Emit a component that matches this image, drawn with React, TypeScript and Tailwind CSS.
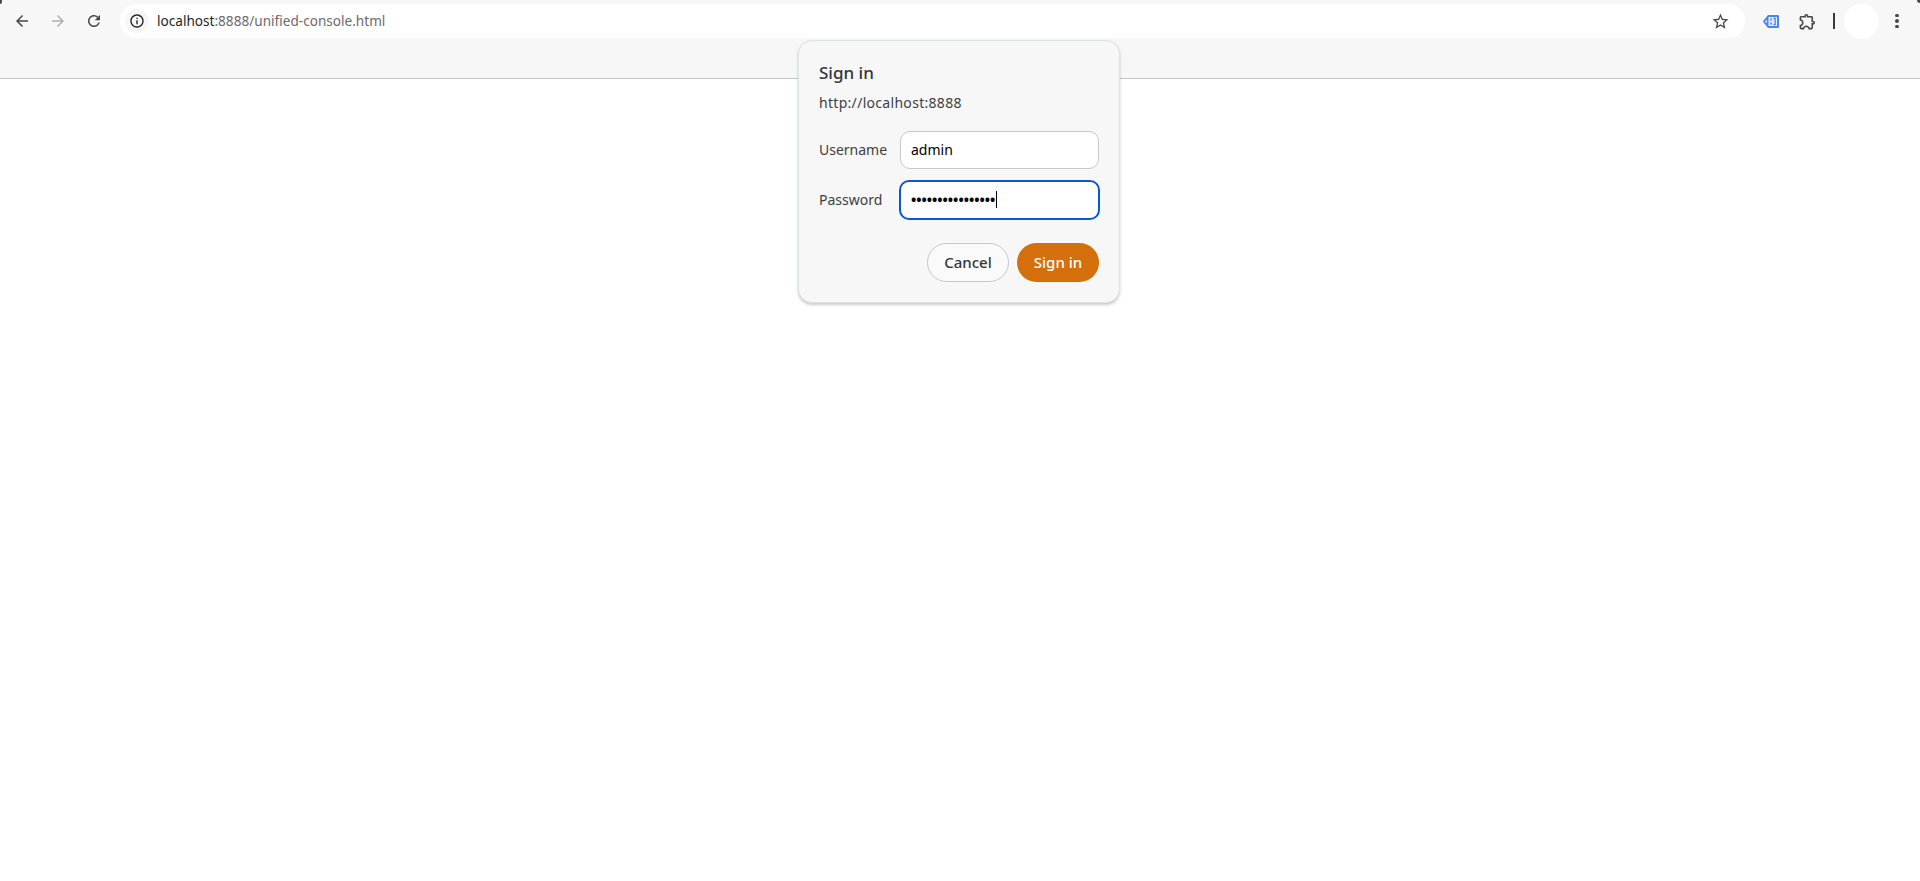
const font = "font-['Noto_Sans','Open_Sans',sans-serif]";

// material-style glyphs, the lucide ones have the wrong heads for chrome's toolbar
const Glyph = ({ d, size, className }: { d: string; size: number; className: string }) => (
  <svg width={size} height={size} viewBox="0 0 24 24" fill="currentColor" className={className}>
    <path d={d} />
  </svg>
);

const icons = {
  back: "M20 11H7.83l5.59-5.59L12 4l-8 8 8 8 1.41-1.41L7.83 13H20v-2z",
  forward: "M4 11h12.17l-5.59-5.59L12 4l8 8-8 8-1.41-1.41L16.17 13H4v-2z",
  reload:
    "M17.65 6.35A7.95 7.95 0 0 0 12 4c-4.42 0-7.99 3.58-7.99 8s3.57 8 7.99 8c3.73 0 6.84-2.55 7.73-6h-2.08A5.99 5.99 0 0 1 12 18c-3.31 0-6-2.69-6-6s2.69-6 6-6c1.66 0 3.14.69 4.22 1.78L13 11h7V4l-2.35 2.35z",
  info: "M11 7h2v2h-2zm0 4h2v6h-2zm1-9C6.48 2 2 6.48 2 12s4.48 10 10 10 10-4.48 10-10S17.52 2 12 2zm0 18c-4.41 0-8-3.59-8-8s3.59-8 8-8 8 3.59 8 8-3.59 8-8 8z",
  star: "M22 9.24l-7.19-.62L12 2 9.19 8.63 2 9.24l5.46 4.73L5.82 21 12 17.27 18.18 21l-1.63-7.03L22 9.24zM12 15.4l-3.76 2.27 1-4.28-3.32-2.88 4.38-.38L12 6.1l1.71 4.04 4.38.38-3.32 2.88 1 4.28L12 15.4z",
  puzzle:
    "M10.5 4.5c.28 0 .5.22.5.5v2h6v6h2c.28 0 .5.22.5.5s-.22.5-.5.5h-2v6h-2.12c-.68-1.75-2.39-3-4.38-3s-3.7 1.25-4.38 3H4v-2.12c1.75-.68 3-2.39 3-4.38 0-1.99-1.24-3.7-2.99-4.38L4 7h6V5c0-.28.22-.5.5-.5m0-2C9.12 2.5 8 3.62 8 5H4c-1.1 0-1.99.9-1.99 2v3.8h.29c1.49 0 2.7 1.21 2.7 2.7s-1.21 2.7-2.7 2.7H2V20c0 1.1.9 2 2 2h3.8v-.3c0-1.49 1.21-2.7 2.7-2.7s2.7 1.21 2.7 2.7v.3H17c1.1 0 2-.9 2-2v-4c1.38 0 2.5-1.12 2.5-2.5S20.38 11 19 11V7c0-1.1-.9-2-2-2h-4c0-1.38-1.12-2.5-2.5-2.5z",
};

const ExtensionTag = () => (
  <svg width="16" height="13" viewBox="0 0 16 13" className="block">
    <path d="M5 0h10a1 1 0 0 1 1 1v11a1 1 0 0 1-1 1H5L.4 7.2a1 1 0 0 1 0-1.4z" fill="#4a86f0" />
    <rect x="5.5" y="2" width="8.5" height="9" fill="#e3ecfc" />
    <circle cx="3.2" cy="6.5" r="1" fill="#fff" />
    <path d="M8 3.5v2M8 7.5v2" stroke="#3a78e8" strokeWidth="1.4" />
    <path d="M10.5 3.3h1.6v6.4h-1.6" fill="none" stroke="#3a78e8" strokeWidth="1.2" />
  </svg>
);

const ToolButton = ({ children }: { children: React.ReactNode }) => (
  <span className="flex h-[36px] w-[36px] items-center justify-center">{children}</span>
);

const Toolbar = () => (
  <header className="flex h-[79px] items-start border-b border-[#c4c4c4] bg-[#f7f7f7]">
    <div className="flex h-[42px] w-full items-center">
      <div className="ml-[4px] flex items-center">
        <ToolButton>
          <Glyph d={icons.back} size={18} className="text-[#474747]" />
        </ToolButton>
        <ToolButton>
          <Glyph d={icons.forward} size={18} className="text-[#b0b0b0]" />
        </ToolButton>
        <ToolButton>
          <Glyph d={icons.reload} size={18} className="text-[#474747]" />
        </ToolButton>
      </div>
      <div className="mx-[8px] flex h-[34px] flex-1 items-center rounded-full bg-white pl-[5px] pr-[15px]">
        <span className="flex h-[24px] w-[24px] items-center justify-center rounded-full bg-[#f7f7f7]">
          <Glyph d={icons.info} size={16} className="text-[#1f1f1f]" />
        </span>
        <span className="ml-[8px] text-[13.6px] text-[#1f1f1f]">
          localhost<span className="text-[#6b6b6b]">:8888/unified-console.html</span>
        </span>
        <Glyph d={icons.star} size={19} className="ml-auto text-[#474747]" />
      </div>
      <div className="flex items-center pr-[5px]">
        <ToolButton>
          <ExtensionTag />
        </ToolButton>
        <ToolButton>
          <Glyph d={icons.puzzle} size={19} className="text-[#474747]" />
        </ToolButton>
        <span className="ml-[8px] h-[16px] w-[2px] bg-[#3a3a3a]" />
        <span className="ml-[9px] h-[35px] w-[35px] rounded-full bg-white" />
        <ToolButton>
          <span className="flex flex-col gap-[2px]">
            <i className="h-[3.5px] w-[3.5px] rounded-full bg-[#474747]" />
            <i className="h-[3.5px] w-[3.5px] rounded-full bg-[#474747]" />
            <i className="h-[3.5px] w-[3.5px] rounded-full bg-[#474747]" />
          </span>
        </ToolButton>
      </div>
    </div>
  </header>
);

const SignInDialog = () => (
  <div className="absolute left-[798px] top-[40px] w-[322px] rounded-[14px] border border-[#dde3e3] bg-[#f7f7f7] px-[20px] pb-[20px] pt-[20px] shadow-[0_2px_3px_rgba(100,110,120,0.35)]">
    <h2 className="text-[17px] font-medium leading-[23px] text-[#33363a]">Sign in</h2>
    <p className="mt-[9px] text-[14px] leading-[20px] tracking-[0.3px] text-[#3c4043]">http://localhost:8888</p>
    <div className="mt-[18px] grid grid-cols-[81px_1fr] items-center gap-y-[11px] text-[14px] text-[#3c4043]">
      <label className="pb-[2px]">Username</label>
      <input
        readOnly
        value="admin"
        className="h-[38px] w-full rounded-[10px] border border-[#c8c8c8] bg-white px-[10px] pb-[2px] text-[14px] text-black outline-none"
      />
      <label className="pb-[2px]">Password</label>
      <div className="-mx-[1px] flex h-[40px] items-center rounded-[10px] border-2 border-[#0b57d0] bg-white px-[10px] pb-[1px] text-[14px] text-black">
        <span className="font-bold">••••••••••••••••</span>
        <span className="ml-[1px] h-[17px] w-[1px] bg-black" />
      </div>
    </div>
    <div className="mt-[23px] flex justify-end gap-[8px]">
      <button className="h-[39px] w-[82px] rounded-full border border-[#c8c8c8] bg-[#fafafa] text-[15px] font-medium text-[#33363a]">Cancel</button>
      <button className="h-[39px] w-[82px] rounded-full bg-[#d56f0c] text-[15px] font-medium text-white">Sign in</button>
    </div>
  </div>
);

export default function App() {
  return (
    <div className={`relative h-[881px] overflow-hidden bg-white ${font}`}>
      <Toolbar />
      <SignInDialog />
      {/* bits of the desktop showing past the window's rounded corners */}
      <span className="absolute left-0 top-0 h-[4px] w-[2px] rounded-br-[2px] bg-[#4a4a4a]" />
      <span className="absolute right-0 top-0 h-[3px] w-[3px] rounded-bl-[3px] bg-[#4a4a4a]" />
    </div>
  );
}
